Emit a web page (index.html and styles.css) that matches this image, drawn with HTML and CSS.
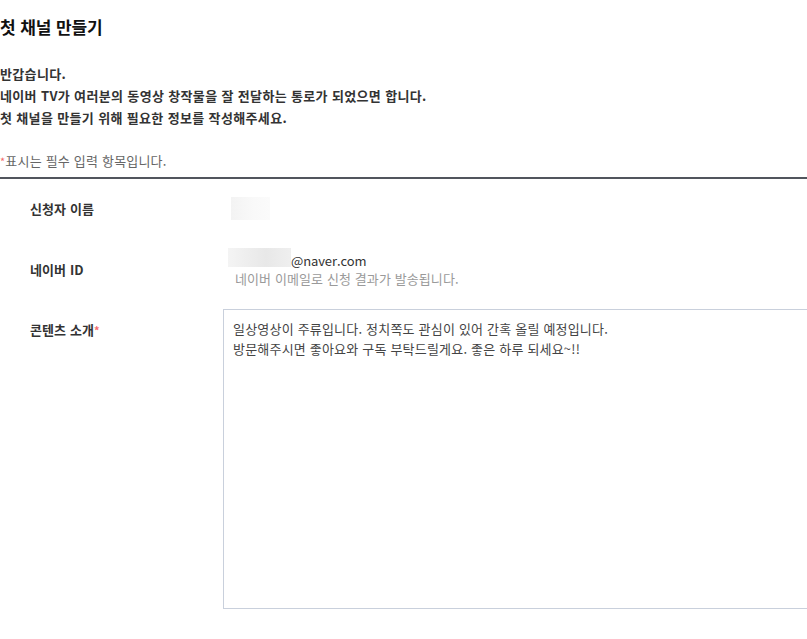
FILE: index.html
```html
<!DOCTYPE html>
<html lang="ko">
<head>
<meta charset="utf-8">
<title>첫 채널 만들기</title>
<link rel="stylesheet" href="styles.css">
</head>
<body>
<div class="page">
  <header class="intro">
    <h1 class="title">첫 채널 만들기</h1>
    <p class="greeting">반갑습니다.<br>네이버 TV가 여러분의 동영상 창작물을 잘 전달하는 통로가 되었으면 합니다.<br>첫 채널을 만들기 위해 필요한 정보를 작성해주세요.</p>
    <p class="notice"><span class="req">*</span>표시는 필수 입력 항목입니다.</p>
  </header>
  <div class="form">
    <div class="row row-name">
      <div class="label">신청자 이름</div>
      <div class="value"><span class="blur blur-name"></span></div>
    </div>
    <div class="row row-id">
      <div class="label">네이버 ID</div>
      <div class="value value-id">
        <div class="id-line"><span class="blur blur-id"></span>@naver.com</div>
        <div class="hint">네이버 이메일로 신청 결과가 발송됩니다.</div>
      </div>
    </div>
    <div class="row row-content">
      <div class="label label-top">콘텐츠 소개<span class="req">*</span></div>
      <div class="value">
        <textarea class="content-box" readonly>일상영상이 주류입니다. 정치쪽도 관심이 있어 간혹 올릴 예정입니다.
방문해주시면 좋아요와 구독 부탁드릴게요. 좋은 하루 되세요~!!</textarea>
      </div>
    </div>
  </div>
</div>
</body>
</html>
```

FILE: styles.css
```css
html, body {
  margin: 0;
  padding: 0;
  overflow: hidden;
  background: #fff;
}
body {
  font-family: "Noto Sans CJK KR", "Noto Sans", sans-serif;
  color: #333;
  font-size: 13px;
}
.page {
  width: 807px;
}
.intro {
  padding-top: 15px;
  padding-bottom: 5px;
  border-bottom: 2px solid #51555d;
}
.title {
  margin: 0;
  font-size: 17px;
  line-height: 24px;
  font-weight: 700;
  color: #111;
  letter-spacing: -0.1px;
}
.greeting {
  margin: 24px 0 0;
  font-size: 13px;
  line-height: 22px;
  font-weight: 700;
  color: #333;
  letter-spacing: 0.35px;
}
.notice {
  margin: 21px 0 0;
  font-size: 13px;
  line-height: 22px;
  color: #666;
  letter-spacing: 0.2px;
}
.req {
  color: #f46b6b;
  font-size: 11px;
}
.row {
  display: flex;
  align-items: center;
}
.label {
  width: 193px;
  padding-left: 30px;
  flex: none;
  font-weight: 700;
  font-size: 13px;
  line-height: 18px;
  color: #333;
  letter-spacing: 0.1px;
}
.value {
  flex: 1;
  min-width: 0;
}
.row-name {
  height: 59px;
}
.blur {
  display: inline-block;
  vertical-align: middle;
}
.blur-name {
  width: 39px;
  height: 23px;
  margin-left: 8px;
  background: linear-gradient(90deg, #f3f3f3, #f9f9f9 60%, #fbfbfb);
}
.row-id {
  padding: 14px 0 21px;
}
.value-id {
  line-height: 18px;
}
.id-line {
  font-size: 13px;
  color: #333;
  letter-spacing: -0.1px;
}
.blur-id {
  width: 63px;
  height: 19px;
  margin-left: 5px;
  margin-top: -4px;
  vertical-align: top;
  background: linear-gradient(90deg, #f4f4f4, #e8e8e8 60%, #efefef);
}
.hint {
  padding-left: 12px;
  font-size: 13px;
  color: #9a9a9a;
  letter-spacing: 0.1px;
}
.row-content {
  align-items: flex-start;
}
.label-top {
  padding-top: 12px;
}
.content-box {
  display: block;
  box-sizing: border-box;
  width: 600px;
  height: 300px;
  margin: 0;
  padding: 9px 9px;
  border: 1px solid #c9d0dc;
  resize: none;
  outline: none;
  font-family: "Noto Sans CJK KR", "Noto Sans", sans-serif;
  font-size: 13px;
  line-height: 20px;
  color: #444;
  letter-spacing: 0.2px;
  background: #fff;
  overflow: hidden;
}
```
